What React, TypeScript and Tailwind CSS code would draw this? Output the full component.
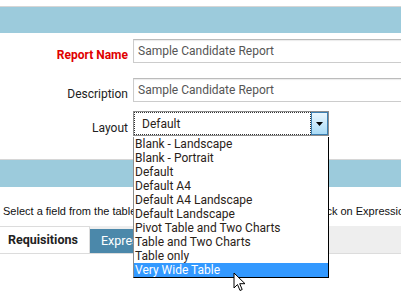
import React from "react";

const layouts = [
  "Blank - Landscape",
  "Blank - Portrait",
  "Default",
  "Default A4",
  "Default A4 Landscape",
  "Default Landscape",
  "Pivot Table and Two Charts",
  "Table and Two Charts",
  "Table only",
  "Very Wide Table",
];

const FieldRow = ({
  label,
  required,
  className,
  children,
}: {
  label: string;
  required?: boolean;
  className?: string;
  children: React.ReactNode;
}) => (
  <div className={`flex items-end ${className ?? ""}`}>
    <label
      className={`w-[128px] shrink-0 text-right text-[12px] leading-[14px] pb-[1px] ${
        required ? "font-bold text-[#e00000]" : "text-[#222]"
      }`}
    >
      {label}
    </label>
    <div className="ml-[5px] shrink-0">{children}</div>
  </div>
);

const TextInput = ({ value }: { value: string }) => (
  <div className="w-[300px] h-[24px] border border-[#ccc] border-t-[#bbb] shadow-[inset_0_1px_1px_rgba(0,0,0,0.08)] bg-white pl-[4px] flex items-center text-[12px] text-[#555]">
    {value}
  </div>
);

const App = () => {
  return (
    <div className="relative w-[401px] h-[298px] overflow-hidden bg-white font-['Roboto',sans-serif]">
      <div className="h-[6px]" />
      <div className="h-[27px] border-t border-[#d6d6d6] bg-[#9ccbdc]" />

      <FieldRow label="Report Name" required className="mt-[6px]">
        <TextInput value="Sample Candidate Report" />
      </FieldRow>

      <FieldRow label="Description" className="mt-[15px]">
        <TextInput value="Sample Candidate Report" />
      </FieldRow>

      <FieldRow label="Layout" className="mt-[9px]">
        <div className="w-[196px] h-[25px] border border-[#8c8c8c] bg-white flex">
          <div className="flex-1 border border-dotted border-[#333] flex items-center pl-[7px] text-[12px] text-[#2a2218]">
            Default
          </div>
          <div className="w-[17px] border border-[#3c7fb1] bg-gradient-to-b from-[#eaf6fd] to-[#a9dbf6] flex items-center justify-center">
            <svg width="7" height="4" viewBox="0 0 7 4">
              <path d="M0 0h7L3.5 4z" fill="#000" />
            </svg>
          </div>
        </div>
      </FieldRow>

      <div className="mt-[23px] h-[28px] border-t border-[#d6d6d6] bg-[#9ccbdc]" />

      <p className="mt-[17px] pl-[3px] whitespace-nowrap text-[11px] leading-[14px] text-[#111] font-['Liberation_Sans',Arial,sans-serif]">
        Select a field from the table below to put it to your report grid, or
        click on Expressions
      </p>

      <div className="mt-[8px] h-[28px] bg-[#eeeeee] border-b border-[#dcdcdc] flex items-end">
        <div className="w-[90px] h-full bg-white border-t border-r border-[#dcdcdc] flex items-center pl-[8px] text-[12.5px] font-bold text-[#222]">
          Requisitions
        </div>
        <div className="w-[90px] h-[24px] bg-[#4b88aa] flex items-center pl-[11px] text-[12.5px] text-white">
          Expressions
        </div>
      </div>

      {/* open layout list */}
      <ul className="absolute left-[133px] top-[137px] w-[196px] bg-white border-l border-l-[#8c8c8c] border-r border-b border-black text-[12px] leading-[14px] text-[#2a2218]">
        {layouts.map((name) => (
          <li
            key={name}
            className={`h-[14px] pl-[1px] whitespace-nowrap ${
              name === "Very Wide Table" ? "bg-[#3399ff] text-white" : ""
            }`}
          >
            {name}
          </li>
        ))}
      </ul>

      {/* mouse pointer */}
      <svg
        className="absolute left-[233px] top-[272px]"
        width="13"
        height="20"
        viewBox="0 0 13 20"
      >
        <path
          d="M1 1v15l3.5-3.5 2.5 6 2.2-1-2.5-5.8H12z"
          fill="#fff"
          stroke="#000"
          strokeWidth="1"
          strokeLinejoin="round"
        />
      </svg>
    </div>
  );
};

export default App;
